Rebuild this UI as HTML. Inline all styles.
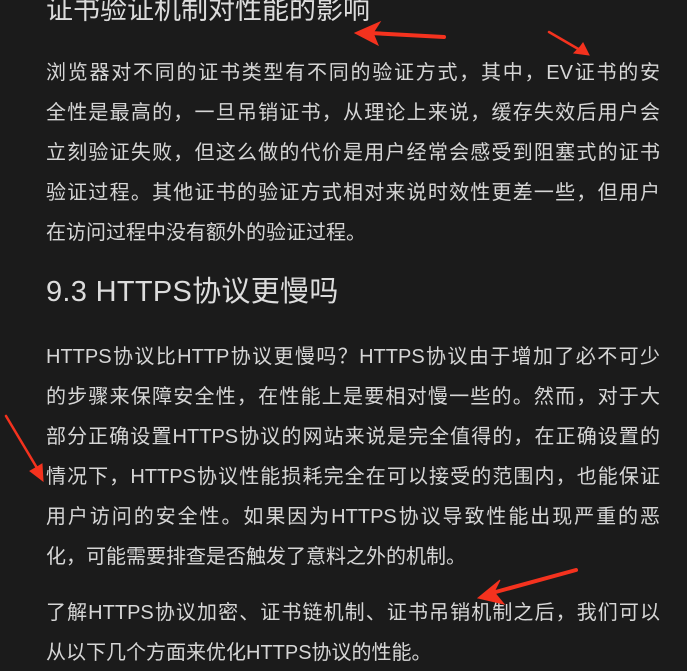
<!DOCTYPE html>
<html><head><meta charset="utf-8"><style>
html,body{margin:0;padding:0;background:#1b1b1b;width:687px;height:671px;overflow:hidden;position:relative}
.l{position:absolute;left:46px;width:614px;white-space:nowrap;color:#d6d6d6;font-family:"Liberation Sans","Noto Sans CJK SC",sans-serif;font-size:20px;line-height:24px;text-align:justify;text-align-last:justify}
.s{text-align-last:left}
.h1{font-size:27px;line-height:32px;color:#dcdcdc}
.h2{font-size:29px;line-height:34px;text-align-last:left;color:#dcdcdc;letter-spacing:0.3px}
svg{position:absolute;left:0;top:0}
</style></head><body>
<div class="l h1 s" style="top:-6px">证书验证机制对性能的影响</div>
<div class="l" style="top:61px">浏览器对不同的证书类型有不同的验证方式，其中，EV证书的安</div>
<div class="l" style="top:101px">全性是最高的，一旦吊销证书，从理论上来说，缓存失效后用户会</div>
<div class="l" style="top:141px">立刻验证失败，但这么做的代价是用户经常会感受到阻塞式的证书</div>
<div class="l" style="top:181px">验证过程。其他证书的验证方式相对来说时效性更差一些，但用户</div>
<div class="l s" style="top:221px">在访问过程中没有额外的验证过程。</div>
<div class="l h2" style="top:275px">9.3 HTTPS协议更慢吗</div>
<div class="l" style="top:345px">HTTPS协议比HTTP协议更慢吗？HTTPS协议由于增加了必不可少</div>
<div class="l" style="top:385px">的步骤来保障安全性，在性能上是要相对慢一些的。然而，对于大</div>
<div class="l" style="top:425px">部分正确设置HTTPS协议的网站来说是完全值得的，在正确设置的</div>
<div class="l" style="top:465px">情况下，HTTPS协议性能损耗完全在可以接受的范围内，也能保证</div>
<div class="l" style="top:505px">用户访问的安全性。如果因为HTTPS协议导致性能出现严重的恶</div>
<div class="l s" style="top:545px">化，可能需要排查是否触发了意料之外的机制。</div>
<div class="l" style="top:601px">了解HTTPS协议加密、证书链机制、证书吊销机制之后，我们可以</div>
<div class="l s" style="top:641px">从以下几个方面来优化HTTPS协议的性能。</div>
<svg width="687" height="671" viewBox="0 0 687 671">
<g fill="#f4321e" stroke="#f4321e" stroke-linecap="round">
<line x1="444" y1="37" x2="370" y2="33" stroke-width="4"/>
<polygon points="355,33 380,22 373,33 378,45" stroke-width="1"/>
<line x1="549" y1="32" x2="580" y2="50" stroke-width="2.5"/>
<polygon points="589,55 574,53 580,47 583,43" stroke-width="1"/>
<line x1="6" y1="416" x2="37" y2="468" stroke-width="2.5"/>
<polygon points="43,481 30,471 37,467 42,464" stroke-width="1"/>
<line x1="576" y1="570" x2="492" y2="593" stroke-width="4"/>
<polygon points="478,598 500,580 494,592 504,604" stroke-width="1"/>
</g>
</svg>
</body></html>
